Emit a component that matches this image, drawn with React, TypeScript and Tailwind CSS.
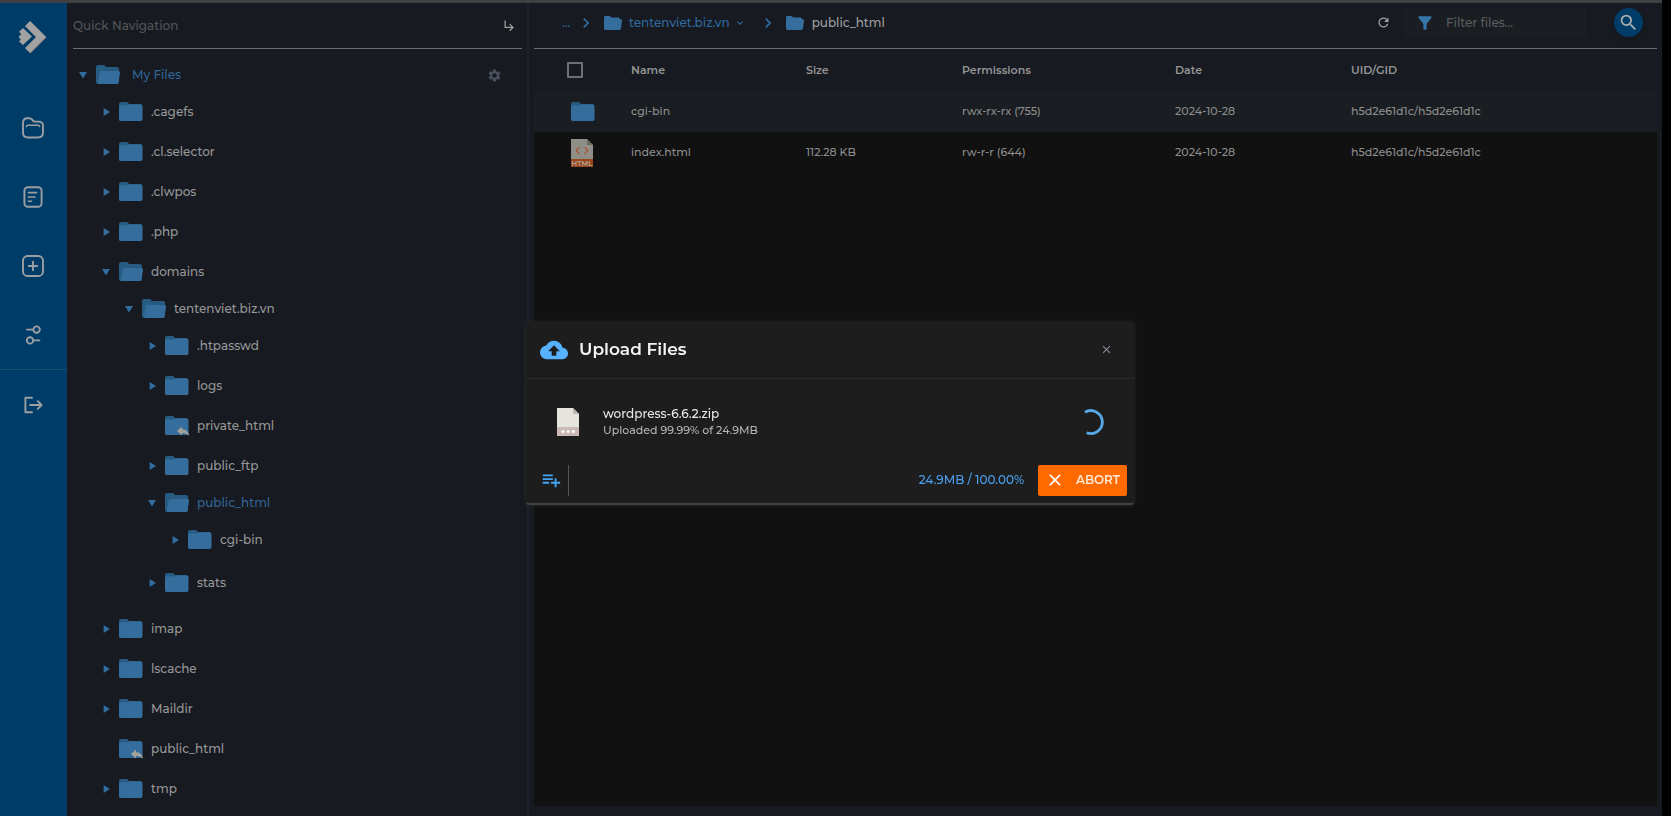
import React, { useState } from "react";
import {
  MdChevronRight,
  MdClose,
  MdCloudUpload,
  MdExpandMore,
  MdFilterAlt,
  MdPlaylistAdd,
  MdRefresh,
  MdSearch,
  MdSettings,
  MdSubdirectoryArrowRight,
} from "react-icons/md";

type Node = {
  name: string;
  open?: boolean;
  link?: boolean;
  active?: boolean;
  children?: Node[];
};

const TREE: Node[] = [
  { name: ".cagefs" },
  { name: ".cl.selector" },
  { name: ".clwpos" },
  { name: ".php" },
  {
    name: "domains",
    open: true,
    children: [
      {
        name: "tentenviet.biz.vn",
        open: true,
        children: [
          { name: ".htpasswd" },
          { name: "logs" },
          { name: "private_html", link: true },
          { name: "public_ftp" },
          { name: "public_html", open: true, active: true, children: [{ name: "cgi-bin" }] },
          { name: "stats" },
        ],
      },
    ],
  },
  { name: "imap" },
  { name: "lscache" },
  { name: "Maildir" },
  { name: "public_html", link: true },
  { name: "tmp" },
];

const FILES = [
  { name: "cgi-bin", size: "", perms: "rwx-rx-rx (755)", date: "2024-10-28", owner: "h5d2e61d1c/h5d2e61d1c", dir: true },
  { name: "index.html", size: "112.28 KB", perms: "rw-r-r (644)", date: "2024-10-28", owner: "h5d2e61d1c/h5d2e61d1c", dir: false },
];

function FolderIcon({ open, link }: { open?: boolean; link?: boolean }) {
  return (
    <svg width="25" height="20" viewBox="0 0 25 20" className="shrink-0" aria-hidden="true">
      <path d="M0 2Q0 0 2 0H7.5Q8.6 0 9.2 .9L10 2H21Q23 2 23 4V17Q23 19 21 19H2Q0 19 0 17Z" fill="#285b82" />
      {open ? (
        <path d="M5.6 6H22.4Q24.3 6 24 7.9L22.6 17.2Q22.3 19 20.5 19H2Q1.8 19 2 17.8L3.6 7.6Q3.9 6 5.6 6Z" fill="#356e9d" />
      ) : (
        <path d="M0 4.6Q0 3.6 1 3.6H9L10.4 2.6H22Q23.5 2.6 23.5 4.2V17Q23.5 19 21.5 19H2Q0 19 0 17Z" fill="#356e9d" />
      )}
      {link && (
        <path d="M12 15L17 10.6V13.2C21.4 13.4 23.8 16 24 20C22.4 17.8 20.2 17 17 17V19.6Z" fill="#a3a19c" />
      )}
    </svg>
  );
}

function CrumbFolder() {
  return (
    <svg width="18" height="14" viewBox="0 0 18 14" className="shrink-0" aria-hidden="true">
      <path d="M0 1.4Q0 0 1.4 0H5.6L7.2 1.6H14.6Q16 1.6 16 3.2H17Q18.2 3.2 18 4.6L17 12.6Q16.8 14 15.4 14H1.4Q0 14 0 12.6Z" fill="#356e9d" />
    </svg>
  );
}

function Caret({ open }: { open?: boolean }) {
  return (
    <svg width="8" height="8" viewBox="0 0 8 8" aria-hidden="true">
      {open ? <path d="M0 1H8L4 7.5Z" fill="#316d9f" /> : <path d="M1.6 0L8 4L1.6 8Z" fill="#316d9f" />}
    </svg>
  );
}

function TreeItem({ node }: { node: Node }) {
  const [open, setOpen] = useState(!!node.open);
  return (
    <li className={node.active ? "pb-[3px]" : "py-[3px]"}>
      <div className="flex h-[34px] items-center">
        {node.link ? (
          <span className="w-[17px] shrink-0" />
        ) : (
          <button
            type="button"
            aria-label={`Toggle ${node.name}`}
            aria-expanded={open}
            onClick={() => setOpen(!open)}
            className="flex h-5 w-[17px] shrink-0 items-center"
          >
            <Caret open={open} />
          </button>
        )}
        <FolderIcon open={open} link={node.link} />
        <a href="#" className={node.active ? "ml-[7px] text-[#316596]" : "ml-[7px] text-[#989898]"}>
          {node.name}
        </a>
      </div>
      {open && node.children && (
        <ul className="pl-[23px]">
          {node.children.map((child) => (
            <TreeItem key={child.name} node={child} />
          ))}
        </ul>
      )}
    </li>
  );
}

function Logo() {
  return (
    <svg width="30" height="34" viewBox="0 0 30 34" aria-hidden="true">
      <path d="M12 1L28 17L12 33L7 28L18 17L7 6Z" fill="#6e6e6e" transform="translate(.6 .6)" />
      <path d="M12 1L28 17L12 33L7 28L18 17L7 6Z" fill="#a2a2a2" />
      <path d="M5 8L14 16.5L5 25L1 21.4L2.8 19.4L1 17.6V16L3.4 14.4L1 11.8Z" fill="#a2a2a2" />
    </svg>
  );
}

function RailIcon({ kind }: { kind: string }) {
  return (
    <svg width="24" height="24" viewBox="0 0 24 24" fill="none" stroke="#9b9fa2" strokeWidth="1.9" strokeLinecap="round" strokeLinejoin="round" aria-hidden="true">
      {kind === "files" && (
        <>
          <path d="M2 7Q2 2.3 6.5 2.3H8.4Q10 2.3 11 3.5L12.4 5Q13 5.6 14 5.6H17.5Q22 5.6 22 10V16.5Q22 21.5 17 21.5H7Q2 21.5 2 16.5Z" />
          <path d="M5.4 10.6Q5.6 9.3 7 9.3H17Q18.4 9.3 18.6 10.6" strokeWidth="1.5" />
        </>
      )}
      {kind === "notes" && (
        <>
          <rect x="3.4" y="2.2" width="17.2" height="19.6" rx="3.6" />
          <path d="M7.4 7.6H15.6M7.4 12H14M7.4 16.2H10.6" strokeWidth="1.6" />
        </>
      )}
      {kind === "add" && (
        <>
          <rect x="2" y="2" width="20" height="20" rx="4.6" />
          <path d="M12 7.8V16.2M7.8 12H16.2" />
        </>
      )}
      {kind === "options" && (
        <>
          <circle cx="15.6" cy="6.6" r="3.2" />
          <circle cx="9" cy="17.4" r="3.2" />
          <path d="M6 6.6H12M13 17.4H18.4" />
        </>
      )}
      {kind === "logout" && (
        <>
          <path d="M11 4.8H4.4V19.2H11" />
          <path d="M9 12H20.4M16.8 8.2L20.6 12L16.8 15.8" />
        </>
      )}
    </svg>
  );
}

function HtmlFileIcon() {
  return (
    <svg width="22" height="28" viewBox="0 0 22 28" aria-hidden="true">
      <path d="M0 0H16L22 6V28H0Z" fill="#8f8f88" />
      <path d="M16 0L22 6H16Z" fill="#6a6a65" />
      <path d="M8.4 8.2L5.2 11.6L8.4 15M13.6 8.2L16.8 11.6L13.6 15" fill="none" stroke="#a8572f" strokeWidth="1.3" />
      <rect y="20" width="22" height="8" fill="#9a451c" />
      <text x="11" y="26.6" textAnchor="middle" fontSize="7" fontWeight="600" fill="#b5a59b">HTML</text>
    </svg>
  );
}

function ZipFileIcon() {
  return (
    <svg width="22" height="28" viewBox="0 0 22 28" aria-hidden="true">
      <path d="M0 0H16L22 6V28H0Z" fill="#e6e4df" />
      <path d="M16 0L22 6H16Z" fill="#bcbab3" />
      <rect y="19" width="22" height="9" fill="#c9bab5" />
      <circle cx="6" cy="23.4" r="1.5" fill="#fff" />
      <circle cx="11.2" cy="23.4" r="1.5" fill="#fff" />
      <circle cx="16.4" cy="23.4" r="1.5" fill="#fff" />
    </svg>
  );
}

const RAIL = [
  { kind: "files", label: "Files" },
  { kind: "notes", label: "Notes" },
  { kind: "add", label: "Add" },
  { kind: "options", label: "Options" },
];

function Rail() {
  return (
    <nav className="flex w-[67px] shrink-0 flex-col bg-[#003c68]" aria-label="Main">
      <a href="#" aria-label="Home" className="mb-[23px] flex h-[67px] items-center justify-center pr-[2px]">
        <Logo />
      </a>
      {RAIL.map((item) => (
        <button key={item.kind} type="button" aria-label={item.label} className="flex h-[69px] items-center justify-center pr-[2px]">
          <RailIcon kind={item.kind} />
        </button>
      ))}
      <div className="border-t border-[#1b4f70]">
        <button type="button" aria-label="Log out" className="flex h-[69px] w-full items-center justify-center pr-[2px]">
          <RailIcon kind="logout" />
        </button>
      </div>
    </nav>
  );
}

function TreePanel() {
  return (
    <aside className="w-[462px] shrink-0 border-r-2 border-[#1f222c] pr-[5px] pl-[6px] text-[12px] font-medium">
      <header className="flex h-[46px] items-center justify-between border-b border-[#6d6d70] pr-[5px]">
        <h2 className="font-medium text-[#545559]">Quick Navigation</h2>
        <button type="button" aria-label="Collapse panel" className="text-[#a0a0a0]">
          <MdSubdirectoryArrowRight size={15} />
        </button>
      </header>
      <div className="pt-[6px] pl-[6px]">
        <div className="pt-[3px]">
          <div className="flex h-[34px] items-center">
            <button type="button" aria-label="Toggle My Files" aria-expanded="true" className="flex h-5 w-[17px] items-center">
              <Caret open />
            </button>
            <FolderIcon open />
            <a href="#" className="ml-[11px] text-[#316596]">My Files</a>
            <button type="button" aria-label="Tree settings" className="mr-5 ml-auto text-[#494e5b]">
              <MdSettings size={15} />
            </button>
          </div>
          <ul className="pl-[23px]">
            {TREE.map((node) => (
              <TreeItem key={node.name} node={node} />
            ))}
          </ul>
        </div>
      </div>
    </aside>
  );
}

function TopBar() {
  return (
    <header className="flex h-[46px] items-center border-b border-[#6d6d70] pr-[14px] pb-[6px] pl-7 text-[12px] font-medium">
      <nav aria-label="Breadcrumb" className="flex items-center text-[#316ba0]">
        <a href="#" className="w-[14px]">...</a>
        <MdChevronRight size={20} />
        <span className="ml-2">
          <CrumbFolder />
        </span>
        <a href="#" className="ml-[7px] flex items-center gap-1">
          tentenviet.biz.vn
          <MdExpandMore size={12} />
        </a>
        <MdChevronRight size={20} className="ml-3" />
        <span className="ml-2">
          <CrumbFolder />
        </span>
        <span className="ml-2 text-[#a0a0a0]">public_html</span>
      </nav>
      <button type="button" aria-label="Refresh" className="ml-auto text-[#a0a0a0]">
        <MdRefresh size={15} />
      </button>
      <label className="ml-3 flex h-[30px] w-[183px] items-center bg-[#1a1e22] pl-3">
        <MdFilterAlt size={20} className="shrink-0 text-[#3575a8]" />
        <input
          type="text"
          aria-label="Filter files"
          placeholder="Filter files..."
          className="ml-[11px] w-full min-w-0 bg-transparent font-medium text-[#a0a0a0] outline-none placeholder:text-[#5b5d5f]"
        />
      </label>
      <button
        type="button"
        aria-label="Search"
        className="ml-7 flex size-[29px] items-center justify-center rounded-full bg-[#003c68] text-[#a8adb0] shadow-md"
      >
        <MdSearch size={21} />
      </button>
    </header>
  );
}

function FileTable() {
  return (
    <table className="w-full table-fixed text-left text-[11px] font-medium text-[#8d8d8d]">
      <colgroup>
        <col className="w-[97px]" />
        <col className="w-[175px]" />
        <col className="w-[156px]" />
        <col className="w-[213px]" />
        <col className="w-[176px]" />
        <col />
      </colgroup>
      <thead>
        <tr className="h-[42px] bg-[#171a21] text-[#949494]">
          <th className="pl-[33px]">
            <input
              type="checkbox"
              aria-label="Select all"
              className="block size-4 appearance-none rounded-[1px] border-2 border-[#6f6f74]"
            />
          </th>
          {["Name", "Size", "Permissions", "Date", "UID/GID"].map((title) => (
            <th key={title} className="font-semibold">{title}</th>
          ))}
        </tr>
      </thead>
      <tbody>
        {FILES.map((file) => (
          <tr key={file.name} className={file.dir ? "h-[41px] bg-[#1a1e22]" : "h-[41px]"}>
            <td className="pl-[37px]">{file.dir ? <FolderIcon /> : <HtmlFileIcon />}</td>
            <td>{file.name}</td>
            <td>{file.size}</td>
            <td>{file.perms}</td>
            <td>{file.date}</td>
            <td>{file.owner}</td>
          </tr>
        ))}
      </tbody>
    </table>
  );
}

function UploadDialog() {
  return (
    <div
      role="dialog"
      aria-labelledby="upload-title"
      className="w-[608px] rounded-[3px] border-b-2 border-[#434343] bg-[#1d1d1d] shadow-[0_0_4px_#2c2c2c]"
    >
      <header className="flex h-[57px] items-center border-b border-[#2b2b36] pr-[21px] pl-[14px]">
        <MdCloudUpload size={28} className="text-[#56b2ff]" />
        <h1 id="upload-title" className="ml-[11px] text-[17px] font-semibold text-[#f4f4f4]">Upload Files</h1>
        <button type="button" aria-label="Close" className="ml-auto text-[#8a8d96]">
          <MdClose size={13} />
        </button>
      </header>
      <div className="flex h-[86px] items-center pr-[28px] pl-[31px]">
        <ZipFileIcon />
        <div className="ml-6 font-medium">
          <p className="text-[12px] leading-[17px] text-[#e8e8e8]">wordpress-6.6.2.zip</p>
          <p className="text-[11px] leading-[17px] text-[#b4b4b4]">Uploaded 99.99% of 24.9MB</p>
        </div>
        <svg width="28" height="28" viewBox="0 0 28 28" className="ml-auto" role="img" aria-label="Uploading">
          <path d="M7 4.2A11.5 11.5 0 1 1 8.6 24.8" fill="none" stroke="#57a9e8" strokeWidth="2.8" />
        </svg>
      </div>
      <footer className="flex h-[38px] items-start pr-[7px] pl-[14px]">
        <div className="flex h-[31px] w-[29px] items-center border-r border-[#555555]">
          <button type="button" aria-label="Add files" className="text-[#45a5f5]">
            <MdPlaylistAdd size={22} />
          </button>
        </div>
        <p className="ml-auto text-[12px] leading-[30px] font-medium text-[#4b9fee]">24.9MB / 100.00%</p>
        <button
          type="button"
          className="ml-[14px] flex h-[31px] w-[89px] items-center justify-between rounded-[2px] bg-[#ff6a00] px-[7px] text-[12px] font-semibold text-[#ffe8d6]"
        >
          <MdClose size={20} className="text-white" />
          ABORT
        </button>
      </footer>
    </div>
  );
}

export default function App() {
  return (
    <div className="flex min-h-screen flex-col bg-black pr-[9px] font-[Montserrat,Inter,sans-serif]">
      <div className="h-[3px] bg-[#403f41]" />
      <div className="flex flex-1 bg-[#171a21]">
        <Rail />
        <TreePanel />
        <main className="flex min-w-0 flex-1 flex-col px-[5px] pb-[10px]">
          <TopBar />
          <div className="flex-1 bg-[#111111]">
            <FileTable />
          </div>
        </main>
      </div>
      <div className="fixed inset-0 flex items-center justify-center pt-[10px] pr-[11px]">
        <UploadDialog />
      </div>
    </div>
  );
}
